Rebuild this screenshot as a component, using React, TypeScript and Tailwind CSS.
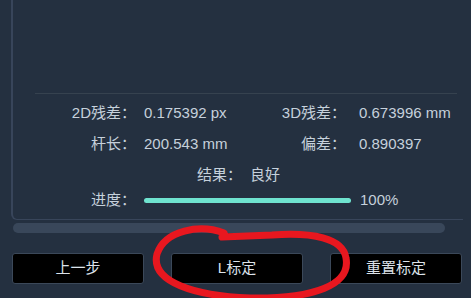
import React from "react";

const font = { fontFamily: '"Liberation Sans", "Noto Sans CJK SC", sans-serif' };

export default function App() {
  return (
    <div className="relative w-[471px] h-[298px] overflow-hidden bg-[#243040] text-[15px] text-[#c6d1dc]" style={font}>
      {/* Result panel */}
      <div className="ml-[11px] mr-[8px] h-[220px] flex flex-col border-l-2 border-b border-[#38455a] rounded-bl-md">
        <div className="flex-1" />
        <div className="ml-[22px] mr-[6px] h-px bg-[#36424f]" />
        <div className="pt-[8px] pb-[8px] flex flex-col">
          <div className="flex items-center h-[22px]">
            <span className="w-[123px] text-right">2D残差：</span>
            <span className="ml-[8px] w-[130px]">0.175392 px</span>
            <span className="w-[72px] text-right">3D残差：</span>
            <span className="ml-[13px]">0.673996 mm</span>
          </div>
          <div className="flex items-center h-[22px] mt-[9px]">
            <span className="w-[123px] text-right">杆长：</span>
            <span className="ml-[8px] w-[130px]">200.543 mm</span>
            <span className="w-[72px] text-right">偏差：</span>
            <span className="ml-[13px]">0.890397</span>
          </div>
          <div className="flex items-center h-[22px] mt-[9px]">
            <span className="w-[229px] text-right">结果：</span>
            <span className="ml-[8px]">良好</span>
          </div>
          <div className="flex items-center h-[22px] mt-[3px]">
            <span className="w-[123px] text-right">进度：</span>
            <div className="ml-[8px] w-[207px] h-[5px] rounded-full bg-[#6fe3cf]" />
            <span className="ml-[9px]">100%</span>
          </div>
        </div>
      </div>

      {/* Scroll bar */}
      <div className="ml-[13px] mt-[3px] w-[432px] h-[10px] rounded-full bg-[#39475a]" />

      {/* Buttons */}
      <div className="mt-[20px] ml-[12px] flex gap-[27px]">
        {["上一步", "L标定", "重置标定"].map((t) => (
          <button
            key={t}
            className="w-[132px] h-[31px] bg-black border border-[#3b4859] rounded-[3px] text-[#dde3ea] text-[15px]"
          >
            {t}
          </button>
        ))}
      </div>

      {/* Hand-drawn annotation */}
      <svg className="absolute inset-0 pointer-events-none" width="471" height="298" viewBox="0 0 471 298">
        <path
          d="M 224 233 C 200 224, 165 230, 157 254 C 150 282, 195 296, 250 298 C 314 299, 351 285, 346 258 C 343 238, 312 232, 272 235 L 222 237"
          fill="none"
          stroke="#e8171f"
          strokeWidth="7"
          strokeLinecap="round"
          strokeLinejoin="round"
        />
      </svg>
    </div>
  );
}
